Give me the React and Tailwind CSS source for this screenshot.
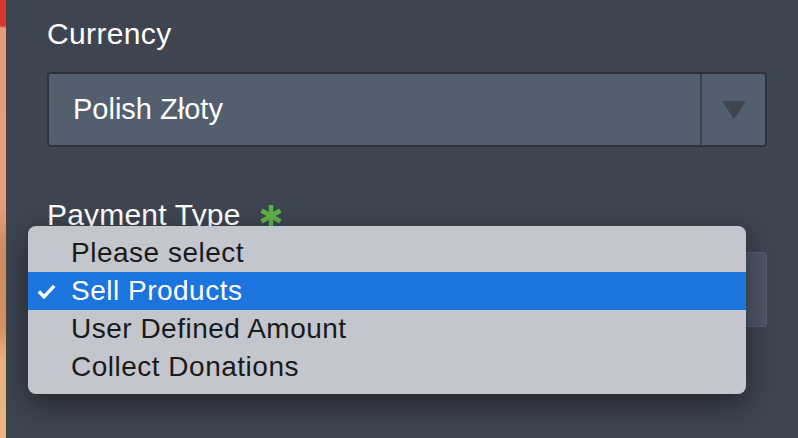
export default function App() {
  const options = ["Please select", "Sell Products", "User Defined Amount", "Collect Donations"];
  const selected = "Sell Products";

  return (
    <div className="flex h-[438px] w-[798px] overflow-hidden bg-[#3e4450] font-['Liberation_Sans',Arial,sans-serif]">
      {/* background image peeking in on the left */}
      <div className="w-[6px] shrink-0 bg-[linear-gradient(to_bottom,#d83a2f_0px,#d83a2f_26px,#e89c78_28px,#e8a07a_200px,#cf8d62_250px,#d6955f_330px,#ebb67b_360px,#ebb67b_438px)]" />

      <div className="relative flex-1 pl-[41px] pr-[31px] pt-[16px]">
        {/* CURRENCY */}
        <label className="block text-[30px] leading-[36px] tracking-[0.35px] text-white">Currency</label>
        <div className="mt-[20px] flex h-[75px] rounded-[4px] border-2 border-[#2e333b] bg-[#535e6e]">
          <div className="flex flex-1 items-center pl-[24px] text-[29px] text-white">Polish Złoty</div>
          <div className="flex w-[65px] items-center justify-center border-l-2 border-[#3b414b]">
            <svg width="24" height="18" viewBox="0 0 24 18">
              <polygon points="0,0 24,0 12,18" fill="#404651" />
            </svg>
          </div>
        </div>

        {/* PAYMENT TYPE */}
        <div className="mt-[50px] flex items-center gap-[18px]">
          <label className="block text-[30px] leading-[36px] tracking-[0.2px] text-white">Payment Type</label>
          <svg width="24" height="24" viewBox="0 0 24 24" className="mt-[2px]">
            <g stroke="#5bb246" strokeWidth="4.5">
              <line x1="12" y1="1" x2="12" y2="23" />
              <line x1="2.5" y1="6.5" x2="21.5" y2="17.5" />
              <line x1="2.5" y1="17.5" x2="21.5" y2="6.5" />
            </g>
          </svg>
        </div>
        <div className="mt-[19px] h-[75px] rounded-[4px] border border-[#56606f] bg-[#4d5667]" />

        {/* OPEN MENU */}
        <div className="absolute left-[22px] top-[226px] w-[718px] rounded-[8px] bg-[#c3c7cd] py-[8px] shadow-[0_10px_28px_rgba(0,0,0,0.45)]">
          {options.map((opt) => (
            <div
              key={opt}
              className={
                opt === selected
                  ? "relative flex h-[38px] items-center bg-[#1c74df] pl-[43px] text-[28px] tracking-[0.5px] text-white"
                  : "relative flex h-[38px] items-center pl-[43px] text-[28px] tracking-[0.5px] text-[#1a1a1a]"
              }
            >
              {opt === selected && (
                <svg width="19" height="15" viewBox="0 0 19 15" className="absolute left-[9px] top-[12px]">
                  <polyline points="1.8,7.5 7,12.8 17.2,1.8" fill="none" stroke="white" strokeWidth="3.4" />
                </svg>
              )}
              {opt}
            </div>
          ))}
        </div>
      </div>
    </div>
  );
}
